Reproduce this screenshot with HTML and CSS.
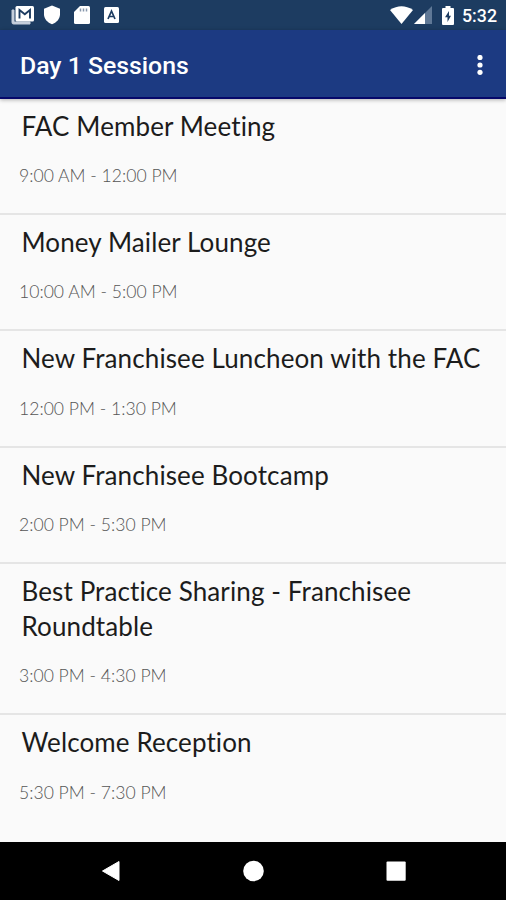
FILE: index.html
```html
<!DOCTYPE html>
<html lang="en">
<head>
  <meta charset="UTF-8" />
  <meta name="viewport" content="width=device-width, initial-scale=1.0" />
  <title>Day 1 Sessions</title>
  <link rel="stylesheet" href="styles.css">
</head>
<body>

  <div class="status-bar">
    <!-- mail -->
    <svg class="icon-mail" width="24" height="20" viewBox="0 0 24 20">
      <path d="M1 5v12.500q0 1.500 1.500 1.500H19v-2H3V5z" fill="#c5cedb" stroke="#c5cedb" />
      <rect x="4.500" y="1" width="18.500" height="15.500" rx="1.500" fill="#fff" />
      <path d="M8.500 13.500V5l5.300 4.300L19 5v8.500" fill="none" stroke="#1d3c61" stroke-width="1.900" />
    </svg>
    <!-- shield -->
    <svg class="icon-shield" width="18" height="20" viewBox="0 0 18 20">
      <path d="M9 .5l8 3.300v5.500c0 4.500-3.500 8.500-8 10-4.500-1.500-8-5.500-8-10V3.800z" fill="#fff" />
    </svg>
    <!-- sd card -->
    <svg class="icon-card" width="16" height="20" viewBox="0 0 16 20">
      <path d="M6 1h8.500q1.500 0 1.500 1.500v15q0 1.500-1.500 1.500h-13Q0 19 0 17.500V7z" fill="#fff" />
      <path d="M6.500 3.500v3M9.500 3.500v3M12.500 3.500v3" stroke="#8797ac" stroke-width="1.500" />
    </svg>
    <!-- keyboard -->
    <svg class="icon-letter" width="15" height="16" viewBox="0 0 15 16">
      <rect width="15" height="16" rx="1.500" fill="#fff" />
      <path d="M4 12l3.500-8L11 12M5 9.500h5" fill="none" stroke="#1d3c61" stroke-width="1.700" />
    </svg>
    <span class="spacer"></span>
    <!-- wifi -->
    <svg class="icon-wifi" width="23" height="18" viewBox="0 0 23 18">
      <path d="M0 4Q11.500-3.500 23 4L11.500 18z" fill="#fff" />
    </svg>
    <!-- signal -->
    <svg class="icon-signal" width="18" height="18" viewBox="0 0 18 18">
      <path d="M18 0v18H0z" fill="#5f7896" />
      <path d="M11 7v11H0z" fill="#fff" />
    </svg>
    <!-- battery -->
    <svg class="icon-battery" width="12" height="19" viewBox="0 0 12 19">
      <path d="M3.500 0h5v2H11q1 0 1 1v15q0 1-1 1H1q-1 0-1-1V3q0-1 1-1h2.500z" fill="#fff" />
      <path d="M7 5L3 11.300H5.500V16L9 9.700H7z" fill="#1d3c61" />
    </svg>
    <span class="clock">5:32</span>
  </div>

  <header class="app-bar">
    <h1>Day 1 Sessions</h1>
    <svg class="menu" width="8" height="22" viewBox="0 0 8 22">
      <circle cx="4" cy="2.500" r="2.600" fill="#fff" />
      <circle cx="4" cy="10" r="2.600" fill="#fff" />
      <circle cx="4" cy="17.300" r="2.600" fill="#fff" />
    </svg>
  </header>

  <main class="sessions">
    <div class="session">
      <h2>FAC Member Meeting</h2>
      <p>9:00 AM - 12:00 PM</p>
    </div>
    <div class="session">
      <h2>Money Mailer Lounge</h2>
      <p>10:00 AM - 5:00 PM</p>
    </div>
    <div class="session">
      <h2>New Franchisee Luncheon with the FAC</h2>
      <p>12:00 PM - 1:30 PM</p>
    </div>
    <div class="session">
      <h2>New Franchisee Bootcamp</h2>
      <p>2:00 PM - 5:30 PM</p>
    </div>
    <div class="session">
      <h2>Best Practice Sharing - Franchisee<br>Roundtable</h2>
      <p>3:00 PM - 4:30 PM</p>
    </div>
    <div class="session">
      <h2>Welcome Reception</h2>
      <p>5:30 PM - 7:30 PM</p>
    </div>
  </main>

  <nav class="nav-bar">
    <svg width="22" height="22" viewBox="0 0 22 22">
      <path d="M3.500 11L20 1.500v19z" fill="#fff" stroke="#fff" stroke-linejoin="round" />
    </svg>
    <svg width="22" height="22" viewBox="0 0 22 22">
      <circle cx="11.500" cy="11" r="10.300" fill="#fff" />
    </svg>
    <svg width="22" height="22" viewBox="0 0 22 22">
      <rect x="1.500" y="1.500" width="19.200" height="19.200" rx="1" fill="#fff" />
    </svg>
  </nav>

</body>
</html>
```

FILE: styles.css
```css
* {
    box-sizing: border-box;
}

body {
    margin: 0;
    height: 900px;
    display: flex;
    flex-direction: column;
    background: #fafafa;
    font-family: Lato, "Noto Sans", sans-serif;
    overflow: hidden;
}

.status-bar {
    height: 30px;
    flex: none;
    display: flex;
    align-items: center;
    padding: 0 9px 0 11px;
    background: #1d3c61;
}
.icon-shield {
    margin-left: 8px;
}
.icon-card {
    margin-left: 13px;
}
.icon-letter {
    margin-left: 14px;
}
.spacer {
    flex: 1;
}
.icon-wifi {
    margin-right: 1px;
}
.icon-battery {
    margin-left: 10px;
}
.clock {
    margin-left: 8px;
    color: #fff;
    font: 500 17.8px/30px Roboto, sans-serif;
    padding-top: 1px;
}

.app-bar {
    height: 69px;
    flex: none;
    display: flex;
    align-items: center;
    justify-content: space-between;
    padding: 5px 22px 0 20px;
    background: #1c3a82;
    border-bottom: 2px solid #06086a;
    box-shadow: 0 1px 4px rgba(0, 0, 0, 0.3);
}
.app-bar h1 {
    margin: 0;
    color: #fff;
    font: 500 24.8px/30px Roboto, sans-serif;
}

.sessions {
    flex: 1;
}
.session {
    height: 116.2px;
    padding: 10px 18px 0 19px;
    border-bottom: 2px solid #e5e5e5;
}
.session:nth-child(5) {
    height: 151.5px;
}
.session:last-child {
    border-bottom: none;
}
.session h2 {
    margin: 0 0 0 2.5px;
    color: #1c1c1c;
    font-size: 26px;
    font-weight: 400;
    line-height: 35.3px;
    letter-spacing: 0.11px;
    white-space: nowrap;
}
.session p {
    margin: 20px 0 0;
    color: #555;
    font-size: 17.6px;
    font-weight: 300;
    line-height: 24px;
}

.nav-bar {
    height: 58px;
    flex: none;
    display: flex;
    justify-content: center;
    align-items: center;
    gap: 121px;
    background: #000;
}
```
